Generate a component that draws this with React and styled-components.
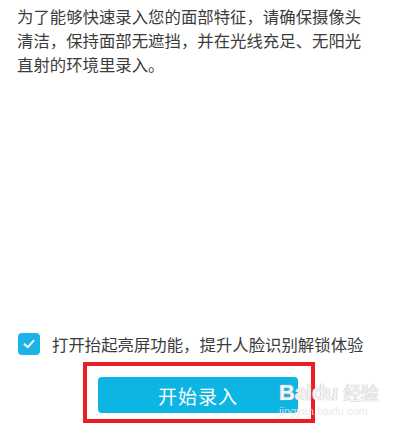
import React from 'react';
import styled, { createGlobalStyle } from 'styled-components';

const GlobalStyle = createGlobalStyle`
  html, body {
    margin: 0;
    padding: 0;
    background: #ffffff;
  }
  body {
    font-family: "Noto Sans CJK SC", "Noto Sans", sans-serif;
  }
`;

const Page = styled.div`
  position: relative;
  width: 397px;
  height: 429px;
  box-sizing: border-box;
  display: flex;
  flex-direction: column;
  overflow: hidden;
`;

const Intro = styled.p`
  margin: 0;
  padding: 4px 20px 0 17px;
  font-size: 16.4px;
  line-height: 24px;
  color: #3c3c3c;
`;

const Spacer = styled.div`
  flex: 1;
`;

const CheckRow = styled.label`
  display: flex;
  align-items: center;
  gap: 12px;
  padding: 0 0 0 18px;
  font-size: 16.4px;
  color: #3c3c3c;
`;

const Box = styled.span`
  width: 22px;
  height: 22px;
  border-radius: 4px;
  background: #1ab4e6;
  display: flex;
  align-items: center;
  justify-content: center;
  flex-shrink: 0;
`;

const Highlight = styled.div`
  align-self: flex-start;
  margin: 6px 0 6px 83px;
  width: 232px;
  height: 61px;
  box-sizing: border-box;
  border: 4px solid #ec1c24;
  padding: 11px 0 0 11px;
`;

const StartButton = styled.button`
  width: 200px;
  height: 36px;
  border: none;
  border-radius: 4px;
  background: #0db5e3;
  color: #ffffff;
  font-family: inherit;
  font-size: 19px;
  letter-spacing: 1px;
  padding: 0;
`;

const Watermark = styled.div`
  position: absolute;
  left: 279px;
  top: 380px;
  display: flex;
  flex-direction: column;
  color: rgba(255, 255, 255, 0.85);
  text-shadow: 0 0 1px #b8b8b8, 0 0 1px #b8b8b8;
  pointer-events: none;
`;

const Brand = styled.span`
  font-family: "Liberation Sans", Arial, sans-serif;
  font-weight: bold;
  font-size: 22px;
  line-height: 24px;
  letter-spacing: -0.5px;
`;

const Site = styled.span`
  font-family: "Liberation Sans", Arial, sans-serif;
  font-size: 11px;
  line-height: 13px;
  color: rgba(230, 230, 230, 0.9);
  text-shadow: none;
`;

export default function App() {
  return (
    <>
      <GlobalStyle />
      <Page>
        <Intro>
          为了能够快速录入您的面部特征，请确保摄像头清洁，保持面部无遮挡，并在光线充足、无阳光直射的环境里录入。
        </Intro>
        <Spacer />
        <CheckRow>
          <Box>
            <svg width="14" height="14" viewBox="0 0 14 14">
              <path d="M2.5 7.2 L5.8 10.2 L11.5 3.8" fill="none" stroke="#fff" strokeWidth="2" strokeLinecap="round" strokeLinejoin="round" />
            </svg>
          </Box>
          打开抬起亮屏功能，提升人脸识别解锁体验
        </CheckRow>
        <Highlight>
          <StartButton>开始录入</StartButton>
        </Highlight>
        <Watermark>
          <Brand>Baidu <span style={{ fontFamily: '"Noto Sans CJK SC", sans-serif', fontWeight: 'normal', fontSize: 18 }}>经验</span></Brand>
          <Site>jingyan.baidu.com</Site>
        </Watermark>
      </Page>
    </>
  );
}
